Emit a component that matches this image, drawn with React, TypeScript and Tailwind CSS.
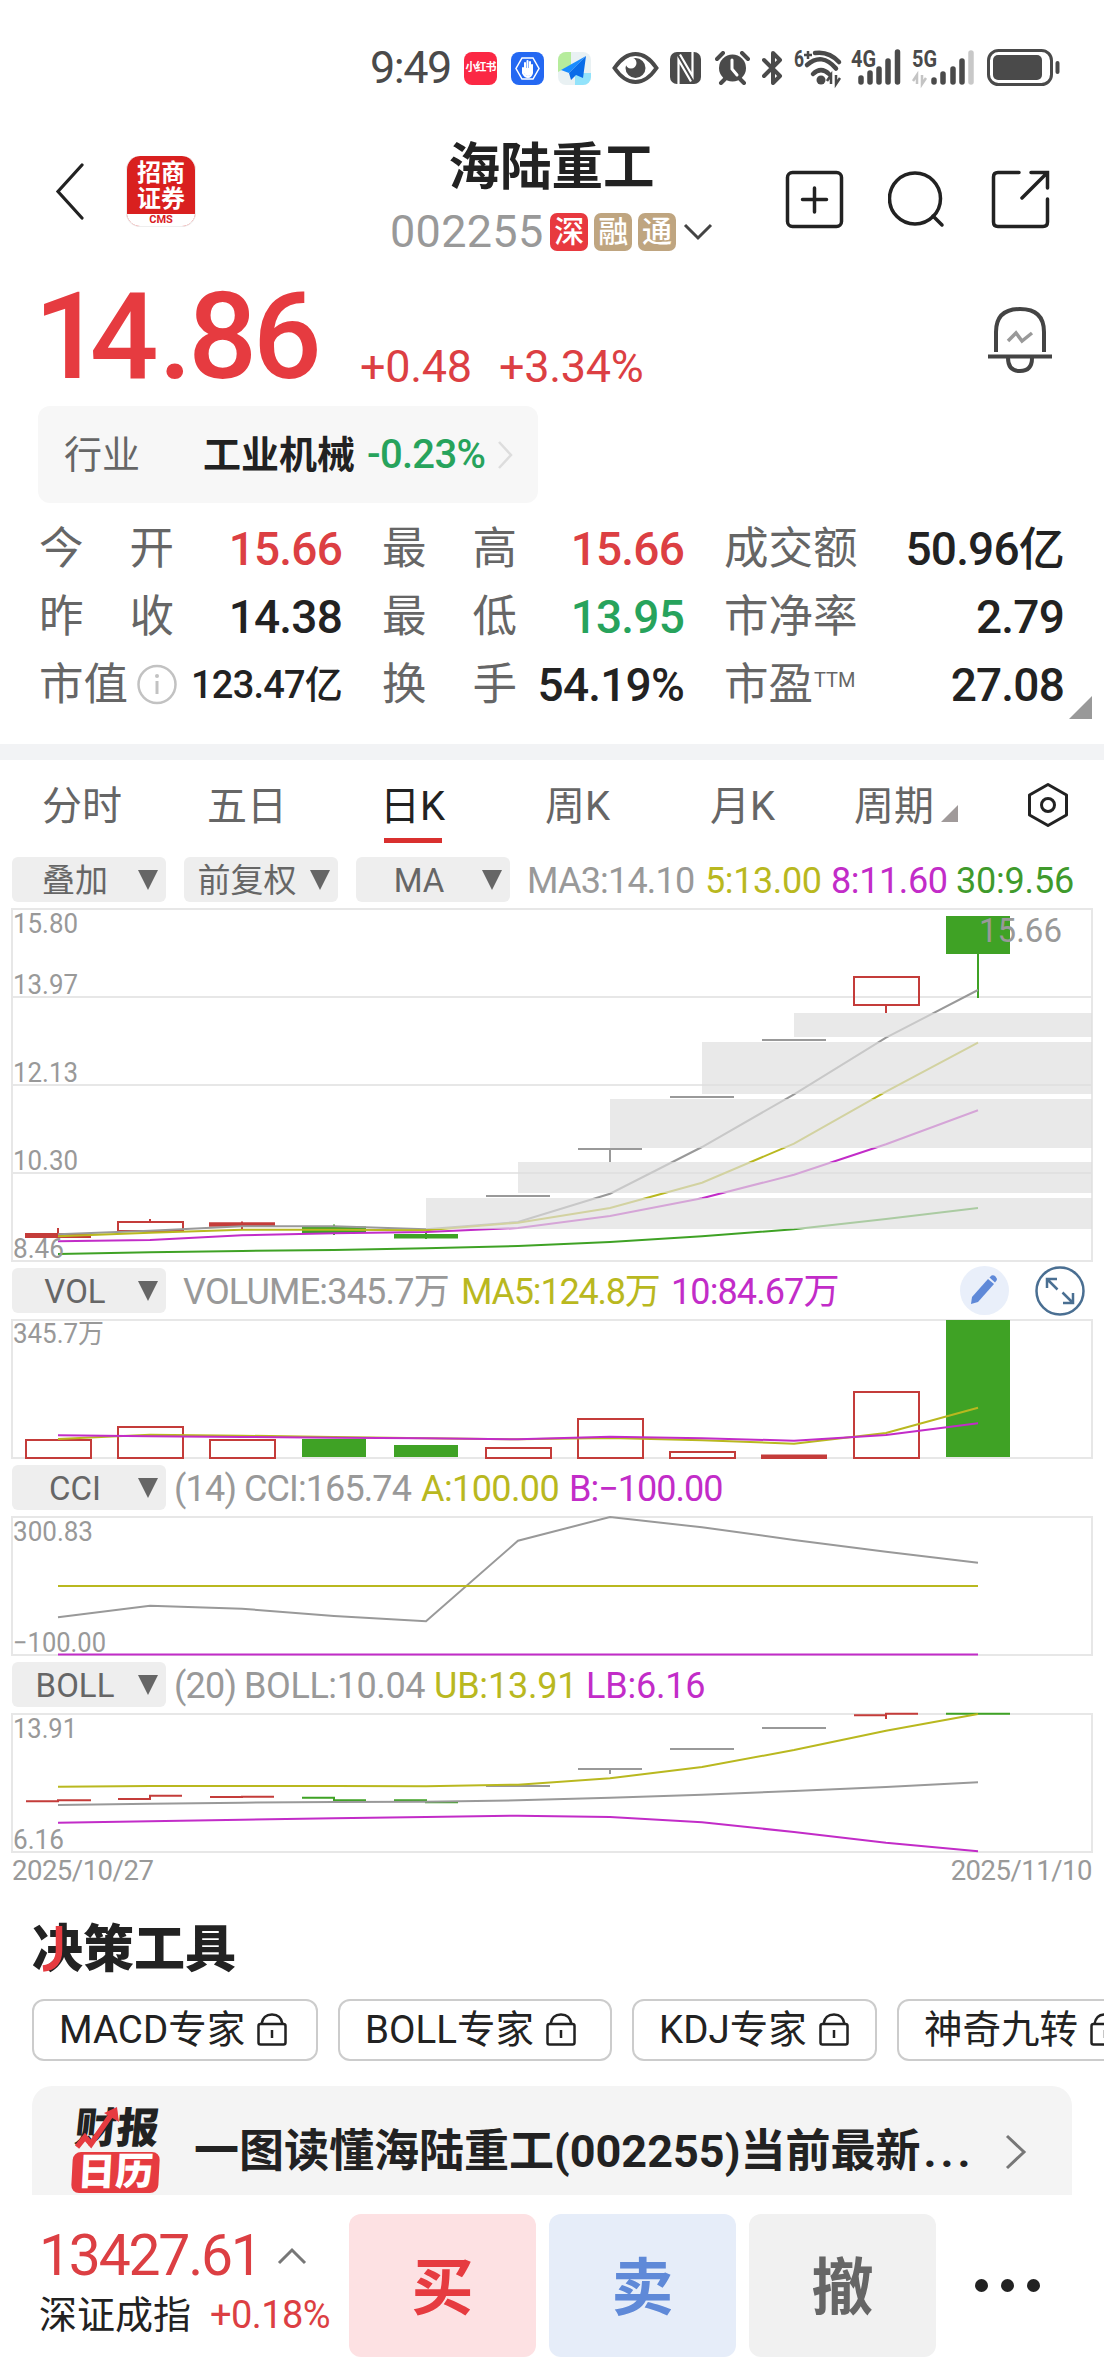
import type { ReactNode } from 'react'

const GRAY = '#999999'
const YELLOW = '#b9b81f'
const MAGENTA = '#c22cc8'
const GREEN = '#3fa225'
const RED = '#c43c3a'
const GRID = '#e7e7e7'

// x centre of each of the 11 trading days
const XS = [58, 150, 242, 334, 426, 518, 610, 702, 794, 886, 978]

function Line({ ys, color, width = 2 }: { ys: number[]; color: string; width?: number }) {
  return (
    <polyline points={ys.map((y, i) => `${XS[i]},${y}`).join(' ')} fill="none" stroke={color} strokeWidth={width} />
  )
}

function AxisLabel({ x = 13, y, w, children }: { x?: number; y: number; w: number; children: string }) {
  return (
    <text x={x} y={y} fontSize={27} fill={GRAY} textLength={w} lengthAdjust="spacingAndGlyphs">
      {children}
    </text>
  )
}

function StatusBar() {
  return (
    <div className="h-[120px] pt-12 pl-[370px] flex items-start text-[#4a4a4a]">
      <div className="w-[94px] h-10 leading-10 text-[45px] tracking-[-1.500px]">9:49</div>
      <div className="w-[33px] h-[33px] mt-1 rounded-lg bg-[#fb2844] text-white text-[11px] font-bold flex items-center justify-center tracking-[-1px] whitespace-nowrap">小红书</div>
      <svg className="ml-[14px] mt-1" width="33" height="33" viewBox="0 0 33 33">
        <rect width="33" height="33" rx="8" fill="#2468f2" />
        <path d="M11 6h11l6 10.500-6 10.500H11L5 16.500z" fill="none" stroke="#fff" strokeWidth="1.500" />
        <path d="M12 16v5q2 4 5 4t4-4v-8M14 17v-6M16.500 16v-7M19 16v-6" fill="none" stroke="#fff" strokeWidth="2" strokeLinecap="round" />
        <path d="M13 16h8v5q-1 3-4 3t-4-3z" fill="#fff" />
      </svg>
      <svg className="ml-[14px] mt-1" width="33" height="33" viewBox="0 0 33 33">
        <rect width="33" height="33" rx="8" fill="#e9f1f3" />
        <path d="M8 0h5v13L0 20V8a8 8 0 0 1 8-8z" fill="#b6ec9c" />
        <path d="M17 21h16v4a8 8 0 0 1-8 8h-8z" fill="#92e3fb" />
        <path d="M28 4 3 18l8 3z" fill="#1a8cff" />
        <path d="M28 4 11 21l2 7 5-5 7 3z" fill="#0a6ce8" />
      </svg>
      <svg className="ml-[21px] mt-1" width="47" height="32" viewBox="0 0 47 32">
        <path d="M2.500 16Q12 2 23.500 2T44.500 16Q35 30 23.500 30T2.500 16z" fill="none" stroke="#4a4a4a" strokeWidth="4" />
        <circle cx="23.500" cy="16" r="10" fill="#4a4a4a" />
        <circle cx="19" cy="11" r="5.500" fill="#fff" />
      </svg>
      <svg className="ml-[11px] mt-1" width="31" height="32" viewBox="0 0 31 32">
        <rect width="31" height="32" rx="7" fill="#4a4a4a" />
        <path d="M8.500 34V8L21 29.500M22.500 -2v26L10 2.500" fill="none" stroke="#fff" strokeWidth="2.200" />
      </svg>
      <svg className="ml-[14px] mt-[3px]" width="35" height="34" viewBox="0 0 35 34">
        <circle cx="17.500" cy="17" r="13.500" fill="#4a4a4a" />
        <path d="M2 8l6-6M33 8l-6-6M6 32l4-4M29 32l-4-4" stroke="#4a4a4a" strokeWidth="4" strokeLinecap="round" />
        <path d="M17 9v9l5 6" fill="none" stroke="#fff" strokeWidth="3" strokeLinecap="round" />
      </svg>
      <svg className="ml-[12px] mt-[3px]" width="22" height="34" viewBox="0 0 22 34">
        <path d="M2 9 18 25l-7 7V2l7 7L2 25" fill="none" stroke="#4a4a4a" strokeWidth="4" strokeLinejoin="round" strokeLinecap="round" />
      </svg>
      <svg className="ml-[10px] overflow-visible" width="48" height="38" viewBox="0 0 48 38">
        <text x="0" y="19" fontSize="23" fontWeight="700" fill="#4a4a4a" textLength="10" lengthAdjust="spacingAndGlyphs">6</text>
        <path d="M14 3v8M10 7h8" stroke="#4a4a4a" strokeWidth="2.500" />
        <path d="M21 5q14-2 24 9M13 17q15-13 29 3.500M19 26q8-8 16 0" fill="none" stroke="#4a4a4a" strokeWidth="4.500" strokeLinecap="round" />
        <circle cx="27" cy="32" r="4.500" fill="#4a4a4a" />
        <path d="M37 36v-9l-4 6M42 27v9l4-6" fill="none" stroke="#4a4a4a" strokeWidth="2.500" />
      </svg>
      <svg className="ml-[9px] overflow-visible" width="52" height="38" viewBox="0 0 52 38">
        <text x="0" y="19" fontSize="23" fontWeight="700" fill="#4a4a4a" textLength="25" lengthAdjust="spacingAndGlyphs">4G</text>
        <path d="M10 34v-4M19 34v-9M28 34V21M37 34V13M46.500 34V4" stroke="#4a4a4a" strokeWidth="5.500" strokeLinecap="round" />
      </svg>
      <svg className="ml-[9px] overflow-visible" width="64" height="38" viewBox="0 0 64 38">
        <text x="0" y="19" fontSize="23" fontWeight="700" fill="#4a4a4a" textLength="25" lengthAdjust="spacingAndGlyphs">5G</text>
        <path d="M5 36v-9l-4 6M10 27v9l4-6" fill="none" stroke="#c4c4c4" strokeWidth="2.500" />
        <path d="M22 34v-2M31 34v-8M41 34V21M50 34V13" stroke="#4a4a4a" strokeWidth="5.500" strokeLinecap="round" />
        <path d="M59 34V5" stroke="#c8c8c8" strokeWidth="5.500" strokeLinecap="round" />
      </svg>
      <svg className="ml-[11px]" width="75" height="38" viewBox="0 0 75 38">
        <rect x="1.500" y="2.500" width="63" height="34" rx="10" fill="none" stroke="#4a4a4a" strokeWidth="3" />
        <rect x="6" y="7" width="49" height="25" rx="5" fill="#4a4a4a" />
        <path d="M70.500 15v9" stroke="#4a4a4a" strokeWidth="4" strokeLinecap="round" />
      </svg>
    </div>
  )
}

function Badge({ className, children }: { className: string; children: string }) {
  return (
    <span className={`w-[38px] h-[38px] rounded-[7px] text-white text-[30px] font-medium flex items-center justify-center leading-none ${className}`}>{children}</span>
  )
}

function Header() {
  return (
    <div className="h-[150px] flex items-start pl-[55px]">
      <svg className="mt-[43px]" width="30" height="58" viewBox="0 0 30 58">
        <path d="M27 2 3 28.500 27 55" fill="none" stroke="#222" strokeWidth="3.200" strokeLinecap="round" />
      </svg>
      <div className="ml-[41px] mt-[36px] w-[70px] h-[71px] rounded-[14px] overflow-hidden bg-[#d9201f] border border-[#eee] border-t-0 flex flex-col items-center">
        <div className="h-[58px] pt-[4px] text-white text-[24px] leading-[26px] font-bold text-center">招商<br />证券</div>
        <div className="w-full flex-1 bg-white text-[#d9201f] text-[11px] leading-[11px] font-bold text-center">CMS</div>
      </div>
      <div className="ml-[194px] w-[323px] flex flex-col items-center">
        <div className="mt-[20px] h-[56px] leading-[56px] text-[51.500px] font-bold text-[#222] whitespace-nowrap">海陆重工</div>
        <div className="mt-[17px] h-[38px] w-full flex items-center">
          <span className="w-[161px] text-[45px] leading-[38px] text-[#999] tracking-[0.300px]">002255</span>
          <Badge className="bg-[#e8393f]">深</Badge>
          <Badge className="ml-[6px] bg-[#bfa580]">融</Badge>
          <Badge className="ml-[6px] bg-[#bfa580]">通</Badge>
          <svg className="ml-[7px] shrink-0" width="30" height="20" viewBox="0 0 30 20">
            <path d="M2 3l13 13L28 3" fill="none" stroke="#444" strokeWidth="3" />
          </svg>
        </div>
      </div>
      <svg className="ml-[72px] mt-[50px]" width="60" height="60" viewBox="0 0 60 60">
        <rect x="2.500" y="2.500" width="54" height="54" rx="5" fill="none" stroke="#222" strokeWidth="3.500" />
        <path d="M29.500 18v24M17.500 29.500h24" stroke="#222" strokeWidth="3.500" strokeLinecap="round" />
      </svg>
      <svg className="ml-[43px] mt-[50px]" width="60" height="60" viewBox="0 0 60 60">
        <circle cx="27" cy="28.500" r="25.500" fill="none" stroke="#222" strokeWidth="3.500" />
        <path d="M45 46l9 9" stroke="#222" strokeWidth="3.500" strokeLinecap="round" />
      </svg>
      <svg className="ml-[43px] mt-[50px]" width="60" height="60" viewBox="0 0 60 60">
        <path d="M28 2.500H7q-4.500 0-4.500 4.500v45q0 4.500 4.500 4.500h45q4.500 0 4.500-4.500V29M40 2.500h16.500V18M55 4 31 28" fill="none" stroke="#222" strokeWidth="3.500" strokeLinecap="round" />
      </svg>
    </div>
  )
}

function Price() {
  return (
    <div className="h-[136px] flex items-start">
      <div className="pl-[34px] pt-[2px] w-[360px] h-[130px] leading-[130px] text-[121px] font-medium text-[#e63b40]">
        <span className="tracking-[-13px]">1</span>4<span className="tracking-[-4px]">.86</span>
      </div>
      <div className="mt-[72px] w-[139px] h-[50px] leading-[50px] text-[45px] text-[#dc3f43] tracking-[-0.300px]">+0.48</div>
      <div className="mt-[72px] h-[50px] leading-[50px] text-[45px] text-[#dc3f43] tracking-[-0.300px]">+3.34%</div>
      <svg className="ml-auto mr-[51px] mt-[36px]" width="66" height="68" viewBox="0 0 66 68">
        <path d="M9 46V26Q9 3 33 3t24 23v20" fill="none" stroke="#444" strokeWidth="4" />
        <path d="M1 50.500h64" stroke="#444" strokeWidth="4" />
        <path d="M21 52q0 13 12 13t12-13" fill="none" stroke="#444" strokeWidth="4" />
        <path d="M21 35l8-8 6 8 10-8" fill="none" stroke="#999" strokeWidth="3.500" />
      </svg>
    </div>
  )
}

function Industry() {
  return (
    <div className="ml-[38px] w-[500px] h-[97px] rounded-xl bg-[#f7f7f7] flex items-center pl-[26px] text-[38px] leading-none">
      <span className="w-[139px] text-[#666]">行业</span>
      <span className="w-[164px] font-bold text-[#222]">工业机械</span>
      <span className="w-[130px] text-[40px] font-[480] text-[#27a35c] tracking-[-0.700px]">-0.23%</span>
      <svg width="16" height="30" viewBox="0 0 16 30">
        <path d="M2 2l12 13L2 28" fill="none" stroke="#ddd" strokeWidth="2.500" />
      </svg>
    </div>
  )
}

function Quote({ label, value, className = 'text-[#222]', size = 'text-[46px]' }: { label: ReactNode; value: string; className?: string; size?: string }) {
  return (
    <div className="flex items-center justify-between whitespace-nowrap">
      <div className="w-[135px] flex justify-between shrink-0 text-[44.500px] text-[#666]">{label}</div>
      <span className={`font-[470] tracking-[-0.800px] ${size} ${className}`}>{value}</span>
    </div>
  )
}

const spread = (s: string) => s.split('').map((c, i) => <span key={i}>{c}</span>)

function Quotes() {
  return (
    <div className="relative h-[241px] pt-[12px] pl-[39px] leading-none">
      <div className="grid grid-cols-[303px_302px_340px] gap-x-10 auto-rows-[68px]">
        <Quote label={spread('今开')} value="15.66" className="text-[#dc3f43]" />
        <Quote label={spread('最高')} value="15.66" className="text-[#dc3f43]" />
        <Quote label="成交额" value="50.96亿" />
        <Quote label={spread('昨收')} value="14.38" />
        <Quote label={spread('最低')} value="13.95" className="text-[#27a35c]" />
        <Quote label="市净率" value="2.79" />
        <Quote
          label={
            <>
              市值
              <svg className="mt-px -mr-[3px]" width="40" height="41" viewBox="0 0 40 41">
                <circle cx="20" cy="20.500" r="18.500" fill="none" stroke="#c2c2c2" strokeWidth="2.500" />
                <circle cx="20" cy="12" r="2" fill="#c2c2c2" />
                <path d="M20 17v13" stroke="#c2c2c2" strokeWidth="3" />
              </svg>
            </>
          }
          value="123.47亿"
          size="text-[38px]"
        />
        <Quote label={spread('换手')} value="54.19%" />
        <Quote
          label={
            <>
              市盈<sup className="top-0 mt-[7px] w-[45px] text-[20px] leading-none">TTM</sup>
            </>
          }
          value="27.08"
        />
      </div>
      <svg className="absolute right-[12px] bottom-[25px]" width="23" height="23">
        <path d="M23 0v23H0z" fill="#999" />
      </svg>
    </div>
  )
}

function Tabs() {
  return (
    <div className="h-[97px] flex items-start pt-[24px] pl-[42px] text-[40px] leading-[45px] text-[#666] whitespace-nowrap">
      <span className="w-[165px]">分时</span>
      <span className="w-[173px]">五日</span>
      <span className="w-[165px] text-[#222]">
        日K
        <span className="block mt-[9px] ml-[4px] w-[58px] h-[5px] bg-[#d9302f]" />
      </span>
      <span className="w-[165px]">周K</span>
      <span className="w-[144px]">月K</span>
      <span className="w-[87px]">周期</span>
      <svg className="mt-[21px]" width="17" height="17">
        <path d="M17 0v17H0z" fill="#a09a9a" />
      </svg>
      <svg className="ml-[69px] -mt-[2px]" width="42" height="46" viewBox="0 0 42 46">
        <path d="M21 2.500 39.500 13v20L21 43.500 2.500 33V13z" fill="none" stroke="#222" strokeWidth="3" strokeLinejoin="round" />
        <circle cx="21" cy="23" r="6.500" fill="none" stroke="#222" strokeWidth="3" />
      </svg>
    </div>
  )
}

function Picker({ children }: { children: string }) {
  return (
    <div className="w-[154px] h-[45px] shrink-0 rounded-md bg-[#eee] flex items-center text-[#666] text-[33px] leading-none whitespace-nowrap">
      <span className="w-[126px] pt-[2px] flex justify-center">{children}</span>
      <svg width="20" height="20">
        <path d="M0 0h20L10 20z" fill="#666" />
      </svg>
    </div>
  )
}

function Legend({ className, children }: { className: string; children: string }) {
  return <span className={`shrink-0 pt-[3px] whitespace-nowrap text-[36px] leading-none ${className}`}>{children}</span>
}

function MainChart() {
  const gaps = [
    [426, 292, 31],
    [518, 256, 31],
    [610, 193, 49],
    [702, 136, 52],
    [794, 107, 24],
  ]
  return (
    <svg className="block my-1" width="1104" height="358">
      <path d="M12 91h1080M12 179h1080M12 267h1080" stroke={GRID} strokeWidth="2" />
      <rect x="12" y="3" width="1080" height="352" fill="none" stroke={GRID} strokeWidth="2" />

      <path d="M25 329.500h66" stroke={RED} strokeWidth="5" />
      <path d="M58 322v10M150 313v3M242 315.500V323M886 99v8" stroke={RED} strokeWidth="2" />
      <rect x="118" y="316" width="65" height="9" fill="none" stroke={RED} strokeWidth="2" />
      <path d="M209 318.500h66" stroke={RED} strokeWidth="4.500" />
      <rect x="302" y="320.500" width="64" height="6.500" fill={GREEN} />
      <path d="M334 318.500v10.500M426 326v7" stroke={GREEN} strokeWidth="2" />
      <rect x="394" y="328" width="64" height="4.500" fill={GREEN} />
      <path d="M486 290h64M578 243h64M670 191h64M762 134h64M610 243v13" stroke={GRAY} strokeWidth="2" />
      <rect x="854" y="71" width="65" height="28" fill="none" stroke={RED} strokeWidth="2" />
      <rect x="946" y="10" width="64" height="38" fill={GREEN} />
      <path d="M978 48v44" stroke={GREEN} strokeWidth="2" />

      <Line ys={[328.3, 324.7, 320.3, 320.3, 323.3, 316, 287.7, 241, 188.3, 131.7, 84]} color={GRAY} />
      <Line ys={[330.3, 326.7, 323.7, 323.7, 324.3, 316.7, 302, 276.7, 237.7, 185.7, 136.7]} color={YELLOW} />
      <Line ys={[335.3, 334, 329.3, 327.3, 326, 322, 310, 292.3, 268.7, 238.3, 204.3]} color={MAGENTA} />
      <Line ys={[348, 346.3, 345, 344, 342.3, 340, 336, 330.3, 323.3, 313, 302]} color={GREEN} />
      {gaps.map(([x, y, h]) => (
        <rect key={x} x={x} y={y} width={1092 - x} height={h} fill="#dfdfdf" fillOpacity="0.68" />
      ))}

      <AxisLabel y={27} w={65}>15.80</AxisLabel>
      <AxisLabel y={88} w={65}>13.97</AxisLabel>
      <AxisLabel y={176} w={65}>12.13</AxisLabel>
      <AxisLabel y={264} w={65}>10.30</AxisLabel>
      <AxisLabel y={352} w={51}>8.46</AxisLabel>
      <text x="979" y="36" fontSize="34" fill={GRAY} textLength="83" lengthAdjust="spacingAndGlyphs">15.66</text>
    </svg>
  )
}

function SubFrame({ children }: { children: ReactNode }) {
  return (
    <svg className="block my-1" width="1104" height="144">
      <rect x="12" y="3" width="1080" height="138" fill="none" stroke={GRID} strokeWidth="2" />
      {children}
    </svg>
  )
}

function VolChart() {
  const hollow = [
    [58, 123],
    [150, 110],
    [242, 123],
    [518, 131],
    [610, 102],
    [702, 135],
    [886, 75],
  ]
  return (
    <SubFrame>
      {hollow.map(([x, y]) => (
        <rect key={x} x={x - 32} y={y} width="65" height={141 - y} fill="none" stroke={RED} strokeWidth="2" />
      ))}
      <rect x="302" y="122" width="64" height="18" fill={GREEN} />
      <rect x="394" y="128" width="64" height="12" fill={GREEN} />
      <rect x="761" y="137.500" width="66" height="4.500" fill={RED} />
      <rect x="946" y="3" width="64" height="137" fill={GREEN} />
      <Line ys={[122, 117.7, 118.7, 120, 121.3, 122.3, 121, 123.3, 126.7, 116, 90.7]} color={YELLOW} />
      <Line ys={[118.3, 119.3, 120, 120.7, 121.3, 122.3, 119.7, 121.3, 123.7, 118, 106.3]} color={MAGENTA} />
      <AxisLabel y={26} w={91}>345.7万</AxisLabel>
    </SubFrame>
  )
}

function CciChart() {
  return (
    <SubFrame>
      <Line ys={[103.3, 91.7, 94.7, 102, 107.3, 26.7, 3, 13.3, 26, 37.7, 48.7]} color={GRAY} />
      <path d="M58 72h920" stroke={YELLOW} strokeWidth="2" />
      <AxisLabel y={27} w={80}>300.83</AxisLabel>
      <AxisLabel y={138} w={93}>−100.00</AxisLabel>
      <path d="M58 140.500h920" stroke={MAGENTA} strokeWidth="2" />
    </SubFrame>
  )
}

function BollChart() {
  return (
    <SubFrame>
      <path d="M26 90.300h32v-1h33M118 88h32v-3.300h32M210 86h32v-.300h32M854 4.300h32v-1.600h32M886 4v4" fill="none" stroke={RED} strokeWidth="2" />
      <path d="M302 86.700h32v2.600h32M394 89.300h32v2h32M946 2.700h64" fill="none" stroke={GREEN} strokeWidth="2" />
      <path d="M486 75h64M578 58h64M610 58v5M670 38h64M762 17h64" stroke={GRAY} strokeWidth="2" />
      <Line ys={[94, 92.7, 91.7, 91, 90.7, 89.3, 86.7, 83.7, 80, 76, 71.3]} color={GRAY} />
      <Line ys={[75.7, 75, 75, 75, 75.3, 73.7, 67.3, 56, 39, 19.7, 3]} color={YELLOW} />
      <Line ys={[111.7, 110.3, 108.7, 107.3, 106, 104.7, 106, 111.3, 121, 131.7, 140.3]} color={MAGENTA} />
      <AxisLabel y={27} w={64}>13.91</AxisLabel>
      <AxisLabel y={138} w={51}>6.16</AxisLabel>
    </SubFrame>
  )
}

function Charts() {
  return (
    <div>
      <div className="h-[45px] flex items-center pl-3">
        <Picker>叠加</Picker>
        <div className="ml-[18px]"><Picker>前复权</Picker></div>
        <div className="ml-[18px]"><Picker>MA</Picker></div>
        <Legend className="ml-[17px] w-[178px] text-[#999] tracking-[-0.800px]">MA3:14.10</Legend>
        <Legend className="w-[126px] text-[#b9b81f] tracking-[-0.400px]">5:13.00</Legend>
        <Legend className="w-[125px] text-[#c22cc8] tracking-[-0.400px]">8:11.60</Legend>
        <Legend className="text-[#3f9a2c] tracking-[-0.200px]">30:9.56</Legend>
      </div>
      <MainChart />
      <div className="h-[45px] flex items-center pl-3">
        <Picker>VOL</Picker>
        <Legend className="ml-[17px] w-[278px] text-[#999] tracking-[-0.800px]">VOLUME:345.7万</Legend>
        <Legend className="w-[210px] text-[#b9b81f] tracking-[-1.200px]">MA5:124.8万</Legend>
        <Legend className="w-[289px] text-[#c22cc8] tracking-[-0.900px]">10:84.67万</Legend>
        <svg width="49" height="49" viewBox="0 0 49 49" className="shrink-0">
          <circle cx="24.500" cy="24.500" r="24.500" fill="#e9effa" />
          <path d="M12 31 28 13l6 5-16 18-7 2z" fill="#5f89d8" />
          <path d="M29.500 11.500l2-2q2-1 4 1t1 4l-1.500 2z" fill="#5f89d8" />
        </svg>
        <svg width="50" height="50" viewBox="0 0 50 50" className="ml-[26px] shrink-0">
          <circle cx="25" cy="25" r="23.500" fill="none" stroke="#4a6f92" strokeWidth="2.500" />
          <path d="M12 22V13h10M12.500 13.500l10 10M38 27v10H28M37.500 36.500l-10-10" fill="none" stroke="#4a6f92" strokeWidth="2.500" />
        </svg>
      </div>
      <VolChart />
      <div className="h-[45px] flex items-center pl-3">
        <Picker>CCI</Picker>
        <Legend className="ml-[8px] w-[70px] text-[#999] tracking-[-0.800px]">(14)</Legend>
        <Legend className="w-[177px] text-[#999] tracking-[-0.900px]">CCI:165.74</Legend>
        <Legend className="w-[148px] text-[#b9b81f] tracking-[-0.600px]">A:100.00</Legend>
        <Legend className="text-[#c22cc8] tracking-[-1px]">B:−100.00</Legend>
      </div>
      <CciChart />
      <div className="h-[45px] flex items-center pl-3">
        <Picker>BOLL</Picker>
        <Legend className="ml-[8px] w-[70px] text-[#999] tracking-[-0.800px]">(20)</Legend>
        <Legend className="w-[190px] text-[#999] tracking-[-0.400px]">BOLL:10.04</Legend>
        <Legend className="w-[152px] text-[#b9b81f] tracking-[-0.200px]">UB:13.91</Legend>
        <Legend className="text-[#c22cc8] tracking-[-0.200px]">LB:6.16</Legend>
      </div>
      <BollChart />
      <div className="h-[30px] px-3 flex justify-between text-[27.500px] leading-[24px] text-[#999] tracking-[-0.500px]">
        <span>2025/10/27</span>
        <span>2025/11/10</span>
      </div>
    </div>
  )
}

function Chip({ className, children }: { className: string; children: string }) {
  return (
    <div className={`h-[62px] shrink-0 rounded-xl border-2 border-[#ccc] flex items-center pl-[25px] pt-px text-[38.500px] leading-none text-[#222] whitespace-nowrap ${className}`}>
      {children}
      <svg className="ml-[12px] -mt-[2px] shrink-0" width="30" height="34" viewBox="0 0 30 34">
        <rect x="1.500" y="11" width="27" height="20.500" rx="2" fill="none" stroke="#222" strokeWidth="2.500" />
        <path d="M4.500 11Q6 1.500 15 1.500T25.500 11M15 17v8" fill="none" stroke="#222" strokeWidth="2.500" />
      </svg>
    </div>
  )
}

function Tools() {
  return (
    <div className="h-[306px] pt-[31px] pl-8 overflow-hidden">
      <div className="relative h-[60px] leading-[60px] text-[51px] font-black text-[#222]">
        决策工具
        <svg className="absolute left-[8px] top-[4px]" width="24" height="54" viewBox="0 0 24 54">
          <path d="M19 2v24q0 17-16 18.500" fill="none" stroke="#e63b40" strokeWidth="6.500" />
        </svg>
      </div>
      <div className="mt-[19px] flex gap-5">
        <Chip className="w-[286px]">MACD专家</Chip>
        <Chip className="w-[274px]">BOLL专家</Chip>
        <Chip className="w-[245px]">KDJ专家</Chip>
        <Chip className="w-[290px]">神奇九转</Chip>
      </div>
      <div className="mt-[25px] w-[1040px] h-[109px] rounded-t-[20px] bg-[#f4f4f4] flex items-start">
        <div className="relative ml-[38px] w-[124px] h-full pt-[24px]">
          <div className="h-[38px] pl-[5px] text-[42px] leading-[38px] font-black text-[#222] -skew-x-6 whitespace-nowrap">财报</div>
          <div className="mt-[4px] ml-[2px] w-[87px] h-[41px] rounded-lg bg-[#e63b40] text-white text-[38px] leading-[40px] font-black text-center -skew-x-3">日历</div>
          <svg className="absolute left-[3px] top-[21px]" width="50" height="44" viewBox="0 0 50 44">
            <path d="M4 40l8-10 6 7L38 8" fill="none" stroke="#e63b40" strokeWidth="5.500" />
            <path d="M31 6 44 0l2 15z" fill="#e63b40" />
          </svg>
        </div>
        <div className="w-[811px] mt-[43px] text-[45px] leading-none font-bold text-[#222] whitespace-nowrap">
          一图读懂海陆重工(002255)当前最新<span className="ml-[3px] tracking-[4px]">...</span>
        </div>
        <svg className="mt-[48px]" width="22" height="36" viewBox="0 0 22 36">
          <path d="M2 2l17 16L2 34" fill="none" stroke="#777" strokeWidth="3" />
        </svg>
      </div>
    </div>
  )
}

function BottomBar() {
  return (
    <div className="h-[181px] pt-[19px] flex items-start">
      <div className="w-[349px] pl-[39px] whitespace-nowrap">
        <div className="flex items-center mt-[17px] h-[50px] text-[57px] leading-[50px] text-[#dc3f43]">
          <span className="w-[238px] tracking-[-2.200px]">13427.61</span>
          <svg width="30" height="18" viewBox="0 0 30 18">
            <path d="M2 16 15 3l13 13" fill="none" stroke="#777" strokeWidth="3" />
          </svg>
        </div>
        <div className="flex items-center mt-[14px] h-[40px] text-[38px] leading-[40px]">
          <span className="w-[171px] text-[#222]">深证成指</span>
          <span className="text-[#dc3f43] tracking-[-0.600px]">+0.18%</span>
        </div>
      </div>
      <div className="flex gap-[13px] text-[62px] font-bold leading-[149px] text-center">
        <div className="w-[187px] h-[143px] rounded-xl bg-[#fde1e3] text-[#e63b40]">买</div>
        <div className="w-[187px] h-[143px] rounded-xl bg-[#e6edf9] text-[#5f89d8]">卖</div>
        <div className="w-[187px] h-[143px] rounded-xl bg-[#f1f1f1] text-[#666]">撤</div>
      </div>
      <div className="ml-[39px] mt-[65px] flex gap-[13px]">
        <i className="w-[13px] h-[13px] rounded-full bg-[#222]" />
        <i className="w-[13px] h-[13px] rounded-full bg-[#222]" />
        <i className="w-[13px] h-[13px] rounded-full bg-[#222]" />
      </div>
    </div>
  )
}

export default function App() {
  return (
    <div className="w-[1104px] h-[2376px] overflow-hidden bg-white font-['Roboto','Noto_Sans_CJK_SC',sans-serif]">
      <StatusBar />
      <Header />
      <Price />
      <Industry />
      <Quotes />
      <div className="h-4 bg-[#f2f3f5]" />
      <Tabs />
      <Charts />
      <Tools />
      <BottomBar />
    </div>
  )
}
